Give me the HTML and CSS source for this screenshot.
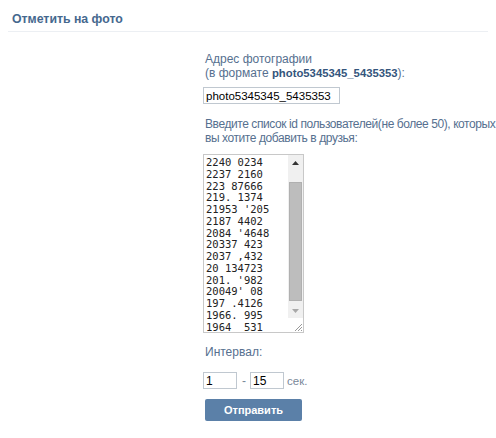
FILE: index.html
```html
<!DOCTYPE html>
<html>
<head>
<meta charset="utf-8">
<link rel="stylesheet" href="styles.css">
</head>
<body>
<div class="header">
  <div class="title">Отметить на фото</div>
</div>
<div class="form">
  <div class="label">Адрес фотографии<br>(в формате <b>photo5345345_5435353</b>):</div>
  <input class="field" type="text" value="photo5345345_5435353">
  <div class="label label2">Введите список id пользователей(не более 50), которых<br>вы хотите добавить в друзья:</div>
  <div class="ta">
    <textarea class="ids">2240 0234
2237 2160
223 87666
219. 1374
21953 '205
2187 4402
2084 '4648
20337 423
2037 ,432
20 134723
201. '982
20049' 08
197 .4126
1966. 995
1964  531</textarea>
    <div class="sb">
      <div class="sb-btn"><svg width="7" height="4" viewBox="0 0 7 4"><path d="M0 4 L3.5 0 L7 4 Z" fill="#333"/></svg></div>
      <div class="sb-track"><div class="sb-thumb"></div></div>
      <div class="sb-btn"><svg width="7" height="4" viewBox="0 0 7 4"><path d="M0 0 L3.5 4 L7 0 Z" fill="#a8a8a8"/></svg></div>
      <div class="sb-corner"><svg width="10" height="10" viewBox="0 0 10 10"><path d="M9 2 L2 9 M9 5 L5 9 M9 8 L8 9" stroke="#999" stroke-width="1"/></svg></div>
    </div>
  </div>
  <div class="label label3">Интервал:</div>
  <div class="interval">
    <input class="num" type="text" value="1">
    <span class="dash">-</span>
    <input class="num" type="text" value="15">
    <span class="sec">сек.</span>
  </div>
  <button class="send">Отправить</button>
</div>
</body>
</html>
```
FILE: styles.css
```css
html, body {
  margin: 0;
  padding: 0;
  background: #fff;
  font-family: "Liberation Sans", Arial, sans-serif;
  font-size: 12px;
}
.header {
  margin: 0 8px;
  padding: 12px 4px 5px;
  border-bottom: 1px solid #eceff3;
}
.title {
  font-size: 12.3px;
  font-weight: bold;
  color: #45688e;
  line-height: 14px;
}
.form {
  margin-left: 203px;
  padding-top: 20px;
  display: flex;
  flex-direction: column;
  align-items: flex-start;
}
.label {
  color: #56708f;
  font-size: 12px;
  line-height: 14px;
  padding-left: 2px;
  white-space: nowrap;
}
.label b {
  color: #34557c;
  font-size: 11.3px;
}
.field {
  margin-top: 7px;
  width: 137px;
  height: 17px;
  box-sizing: border-box;
  border: 1px solid #c0c8d0;
  padding: 0 2px;
  font-family: "Liberation Sans", Arial, sans-serif;
  font-size: 11.5px;
  color: #000;
  outline: none;
}
.label2 {
  margin-top: 13px;
  letter-spacing: -0.42px;
}
.ta {
  margin-top: 9px;
  width: 101px;
  height: 179px;
  box-sizing: border-box;
  border: 1px solid #c8c8c8;
  display: flex;
}
.ids {
  flex: 1;
  min-width: 0;
  border: none;
  margin: 0;
  padding: 2px 2px 0;
  font-family: "DejaVu Sans Mono", monospace;
  font-size: 10.5px;
  line-height: 11.75px;
  color: #222;
  resize: none;
  overflow: hidden;
  outline: none;
}
.sb {
  width: 15px;
  display: flex;
  flex-direction: column;
  background: #f0f0f0;
}
.sb-btn {
  height: 15px;
  display: flex;
  align-items: center;
  justify-content: center;
}
.sb-track {
  flex: 1;
  padding: 12px 1px 2px;
  display: flex;
}
.sb-thumb {
  flex: 1;
  background: #bdbdbd;
  border: 1px solid #b0b0b0;
}
.sb-corner {
  height: 14px;
  background: #fff;
  display: flex;
  align-items: flex-end;
  justify-content: flex-end;
}
.label3 {
  margin-top: 12px;
}
.interval {
  margin-top: 13px;
  display: flex;
  align-items: center;
}
.num {
  width: 34px;
  height: 17px;
  box-sizing: border-box;
  border: 1px solid #c0c8d0;
  padding: 0 2px;
  font-family: "Liberation Sans", Arial, sans-serif;
  font-size: 12px;
  color: #000;
  outline: none;
}
.dash {
  color: #7a8899;
  margin: 0 4px 0 5px;
}
.sec {
  color: #7a8899;
  font-size: 11.5px;
  margin-left: 3px;
}
.send {
  margin-top: 10px;
  margin-left: 2px;
  width: 97px;
  height: 22px;
  border: none;
  border-radius: 2px;
  background: #5b80a8;
  color: #fff;
  font-family: "Liberation Sans", Arial, sans-serif;
  font-weight: bold;
  font-size: 11px;
  cursor: pointer;
}
```
